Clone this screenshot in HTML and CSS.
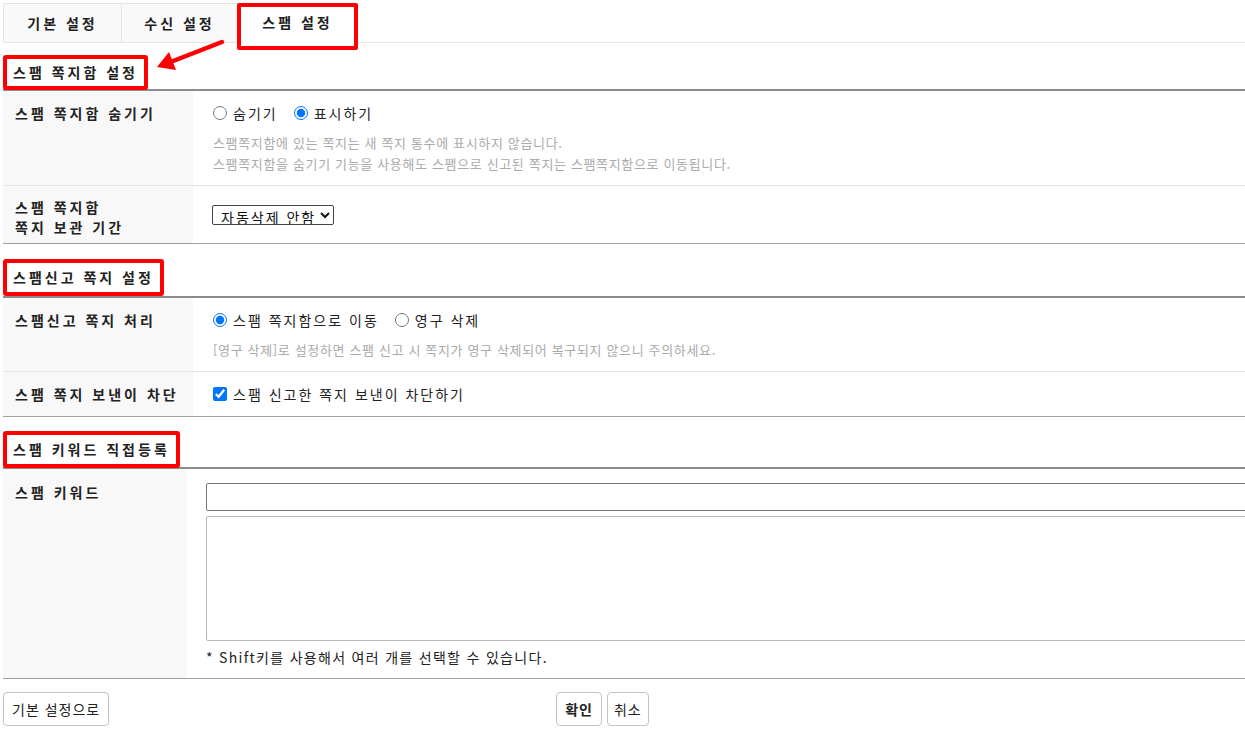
FILE: index.html
```
<!DOCTYPE html>
<html lang="ko">
<head>
<meta charset="utf-8">
<title>스팸 설정</title>
<link rel="stylesheet" href="styles.css">
</head>
<body>
<div class="page">
  <div class="tabs">
    <a class="tab">기본 설정</a>
    <a class="tab">수신 설정</a>
    <a class="tab tab-active">스팸 설정</a>
  </div>
  <svg class="arrow" width="80" height="40" viewBox="0 0 80 40">
    <line x1="72" y1="7" x2="18" y2="28" stroke="#ff0000" stroke-width="4.5" stroke-linecap="round"/>
    <polygon points="7,32 19,17 26,35" fill="#ff0000"/>
  </svg>

  <section class="group group-1">
    <div class="group-title"><span class="mark">스팸 쪽지함 설정</span></div>
    <div class="row">
      <div class="th">스팸 쪽지함 숨기기</div>
      <div class="td">
        <div class="opts">
          <label class="opt"><input type="radio" name="hide">숨기기</label>
          <label class="opt"><input type="radio" name="hide" checked>표시하기</label>
        </div>
        <p class="help">스팸쪽지함에 있는 쪽지는 새 쪽지 통수에 표시하지 않습니다.<br>스팸쪽지함을 숨기기 기능을 사용해도 스팸으로 신고된 쪽지는 스팸쪽지함으로 이동됩니다.</p>
      </div>
    </div>
    <div class="row row-last">
      <div class="th th-two">스팸 쪽지함<br>쪽지 보관 기간</div>
      <div class="td td-select">
        <select class="sel">
          <option>자동삭제 안함</option>
          <option>7일</option>
          <option>30일</option>
        </select>
      </div>
    </div>
  </section>

  <section class="group group-2">
    <div class="group-title"><span class="mark">스팸신고 쪽지 설정</span></div>
    <div class="row">
      <div class="th">스팸신고 쪽지 처리</div>
      <div class="td">
        <div class="opts">
          <label class="opt"><input type="radio" name="report" checked>스팸 쪽지함으로 이동</label>
          <label class="opt"><input type="radio" name="report">영구 삭제</label>
        </div>
        <p class="help">[영구 삭제]로 설정하면 스팸 신고 시 쪽지가 영구 삭제되어 복구되지 않으니 주의하세요.</p>
      </div>
    </div>
    <div class="row row-last">
      <div class="th">스팸 쪽지 보낸이 차단</div>
      <div class="td">
        <div class="opts">
          <label class="opt"><input type="checkbox" checked>스팸 신고한 쪽지 보낸이 차단하기</label>
        </div>
      </div>
    </div>
  </section>

  <section class="group group-3">
    <div class="group-title"><span class="mark">스팸 키워드 직접등록</span></div>
    <div class="row row-last">
      <div class="th th-narrow">스팸 키워드</div>
      <div class="td td-keyword">
        <input class="kw-input" type="text">
        <select class="kw-list" multiple size="6"></select>
        <p class="note">* Shift키를 사용해서 여러 개를 선택할 수 있습니다.</p>
      </div>
    </div>
  </section>

  <div class="buttons">
    <button class="btn">기본 설정으로</button>
    <div class="btn-group">
      <button class="btn btn-strong">확인</button>
      <button class="btn">취소</button>
    </div>
  </div>
</div>
</body>
</html>
```
FILE: styles.css
```
* { box-sizing: border-box; }
html, body { margin: 0; padding: 0; background: #fff; }
body {
  font-family: "Noto Sans CJK KR", "Noto Sans", sans-serif;
  font-size: 14px;
  color: #222;
  overflow: hidden;
}
.page {
  position: relative;
  padding: 3px 0 0 3px;
}

/* tabs */
.tabs {
  display: flex;
  align-items: flex-start;
  height: 40px;
  border-bottom: 1px solid #e5e5e5;
}
.tab {
  width: 118px;
  height: 39px;
  line-height: 38px;
  text-align: center;
  background: #f9f9f9;
  border: 1px solid #e5e5e5;
  border-bottom: 0;
  border-right: 0;
  font-weight: 700;
  letter-spacing: 3px;
  color: #222;
}
.tab + .tab { width: 116px; }
.tab-active.tab {
  width: 121px;
  height: 47px;
  line-height: 31px;
  background: #fff;
  border: 4px solid #ff0000;
  border-radius: 2px;
  position: relative;
  z-index: 2;
}
.arrow {
  position: absolute;
  left: 150px;
  top: 35px;
}

/* groups */
.group-1 { margin-top: 12px; }
.group-2 { margin-top: 15px; }
.group-3 { margin-top: 14px; }
.group-title {
  display: flex;
  align-items: flex-start;
  height: 36px;
  border-bottom: 2px solid #8c8c8c;
}
.group-2 .group-title { height: 39px; }
.group-3 .group-title { height: 38px; }
.mark {
  height: 35px;
  padding: 0 6px;
  line-height: 27px;
  border: 4px solid #ff0000;
  border-radius: 3px;
  background: #fff;
  font-weight: 700;
  letter-spacing: 3px;
  position: relative;
  z-index: 1;
}
.group-2 .mark, .group-3 .mark { height: 37px; line-height: 29px; }

/* rows */
.row {
  display: flex;
  border-bottom: 1px solid #e5e5e5;
}
.row-last { border-bottom: 1px solid #a0a0a0; }
.th {
  flex: none;
  width: 190px;
  padding: 12px 12px;
  background: #f8f8f8;
  font-weight: 700;
  letter-spacing: 3px;
  line-height: 20px;
}
.th-two { padding: 11px 12px 6px; }
.th-narrow { width: 184px; padding-top: 13px; }
.td {
  flex: 1;
  min-width: 0;
  padding: 12px 0 11px 20px;
}
.td-select { padding-top: 19px; padding-left: 19px; }
.opts {
  display: flex;
  gap: 16px;
  line-height: 20px;
  height: 20px;
}
.opt {
  display: flex;
  align-items: center;
  letter-spacing: 2px;
}
.opt input {
  margin: 0 6px 0 0;
  width: 14px;
  height: 14px;
}
.help {
  margin: 9px 0 0;
  font-size: 13px;
  line-height: 21px;
  letter-spacing: 0.65px;
  color: #aaa;
}
.sel {
  font-family: inherit;
  font-size: 14px;
  letter-spacing: 2px;
  height: 20px;
  padding: 0 1px 0 4px;
  margin: 0;
  color: #111;
  border: 1px solid #444;
  border-radius: 2px;
  background: #fff;
}

/* keyword */
.td-keyword {
  overflow: hidden;
  padding: 14px 0 11px 19px;
}
.kw-input {
  display: block;
  width: 1100px;
  height: 28px;
  margin: 0;
  border: 1px solid #767676;
  border-radius: 2px;
  background: #fff;
}
.kw-list {
  display: block;
  width: 1100px;
  height: 125px;
  margin: 5px 0 0;
  border: 1px solid #b8b8b8;
  background: #fff;
}
.note {
  margin: 6px 0 0;
  line-height: 20px;
  letter-spacing: 1.3px;
}

/* buttons */
.buttons {
  display: flex;
  align-items: center;
  margin-top: 13px;
}
.btn-group {
  display: flex;
  gap: 5px;
  margin-left: 447px;
}
.btn {
  height: 34px;
  padding: 0 8px;
  font-family: inherit;
  font-size: 14px;
  letter-spacing: 1px;
  color: #222;
  background: #fff;
  border: 1px solid #c4c4c4;
  border-radius: 4px;
}
.btn + .btn { padding: 0 6px; }
.btn-strong { font-weight: 700; }
```
